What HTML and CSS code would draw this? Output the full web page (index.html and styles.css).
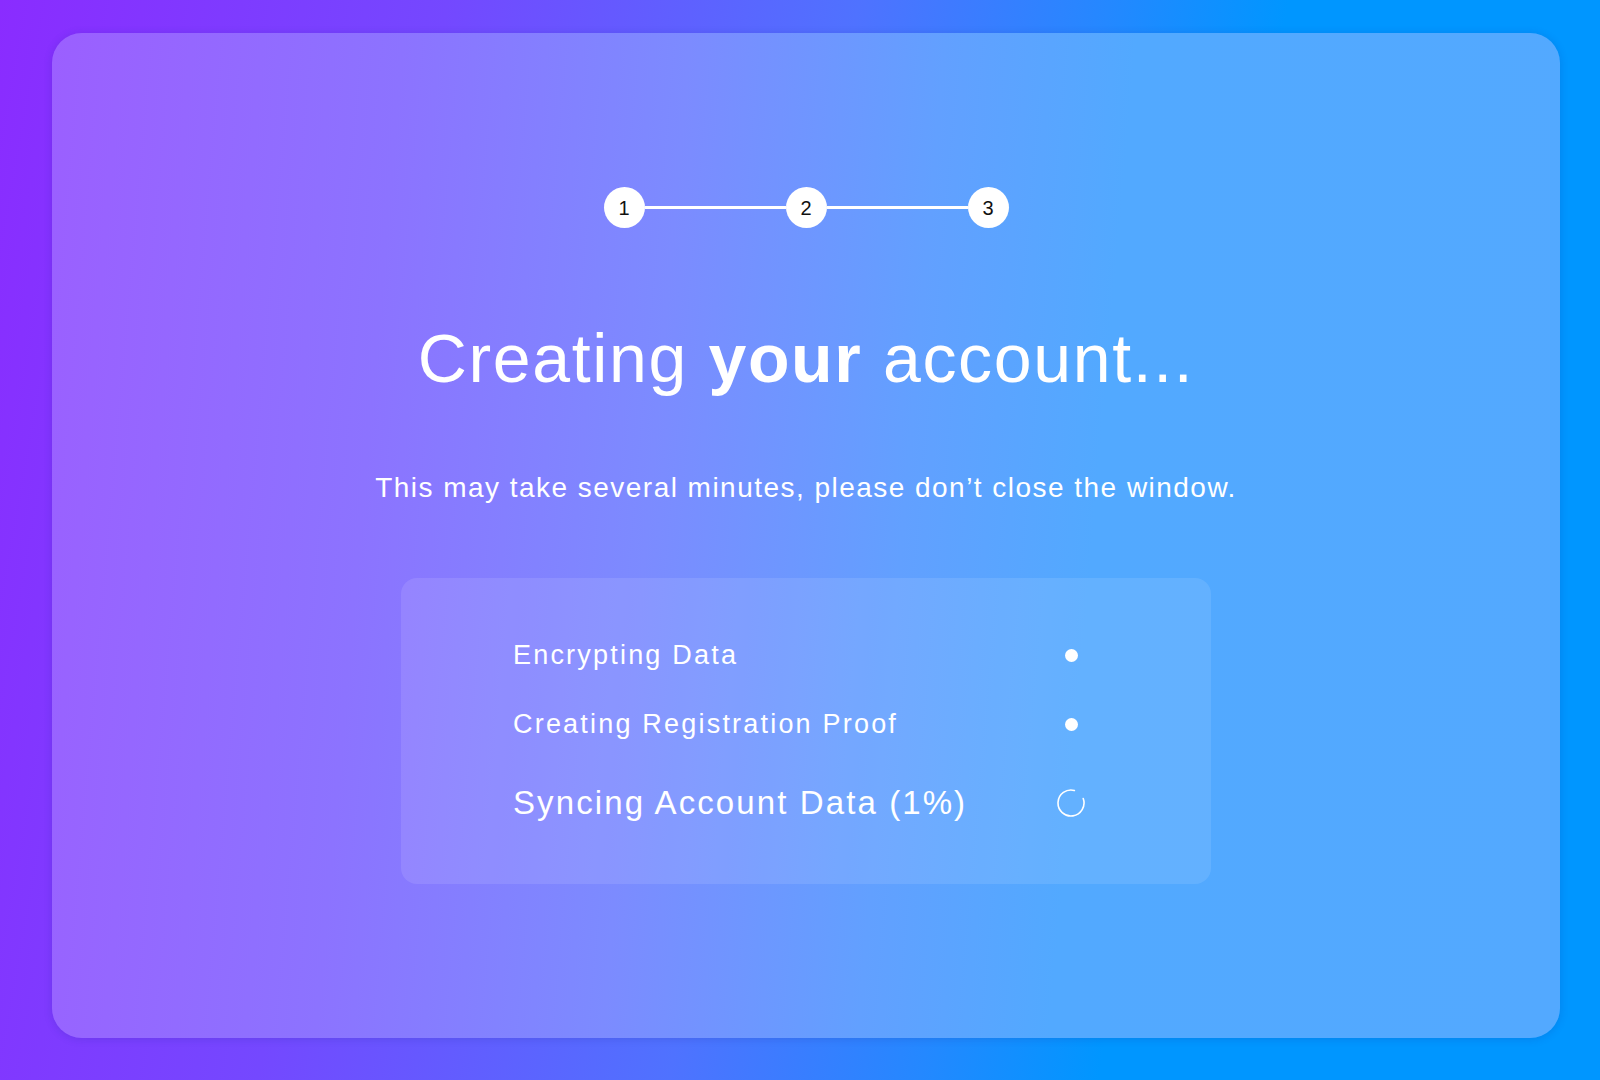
FILE: index.html
```html
<!DOCTYPE html>
<html lang="en">
<head>
<meta charset="utf-8">
<title>Creating your account</title>
<link rel="stylesheet" href="styles.css">
</head>
<body>
<div class="screen">
  <main class="card">
    <div class="steps">
      <span class="step">1</span>
      <span class="step-line"></span>
      <span class="step">2</span>
      <span class="step-line"></span>
      <span class="step">3</span>
    </div>
    <h1 class="title">Creating <b>your</b> account...</h1>
    <p class="subtitle">This may take several minutes, please don’t close the window.</p>
    <section class="tasks">
      <div class="task">
        <span class="task-label">Encrypting Data</span>
        <span class="task-state"><span class="dot"></span></span>
      </div>
      <div class="task">
        <span class="task-label">Creating Registration Proof</span>
        <span class="task-state"><span class="dot"></span></span>
      </div>
      <div class="task task-active">
        <span class="task-label">Syncing Account Data (1%)</span>
        <span class="task-state">
          <svg class="spinner" width="28" height="28" viewBox="0 0 28 28"><path d="M26.22 9.55 A13 13 0 1 1 17.37 1.44" fill="none" stroke="#fff" stroke-width="1.6" stroke-linecap="round"/></svg>
        </span>
      </div>
    </section>
  </main>
</div>
</body>
</html>
```

FILE: styles.css
```css
html, body {
  margin: 0;
  padding: 0;
}
body {
  width: 1600px;
  height: 1080px;
  overflow: hidden;
  font-family: "Liberation Sans", Arial, sans-serif;
  color: #fff;
}
.screen {
  box-sizing: border-box;
  width: 1600px;
  height: 1080px;
  padding: 33px 40px 42px 52px;
  background: linear-gradient(100deg, #8a2cff 0%, #7448ff 25%, #4f72ff 48%, #2488ff 62%, #0096ff 72%, #0096ff 100%);
}
.card {
  box-sizing: border-box;
  height: 100%;
  border-radius: 30px;
  background: linear-gradient(95deg, #9b5fff 0%, #8c73ff 22%, #7c8bff 40%, #62a0ff 56%, #52a9ff 68%, #53a9ff 100%);
  box-shadow: 0 1px 8px rgba(20, 40, 140, 0.18);
  display: flex;
  flex-direction: column;
  align-items: center;
  padding-top: 154px;
}
.steps {
  display: flex;
  align-items: center;
}
.step {
  width: 41px;
  height: 41px;
  border-radius: 50%;
  background: #fff;
  color: #111;
  font-size: 20px;
  display: flex;
  align-items: center;
  justify-content: center;
  line-height: 1;
}
.step-line {
  width: 141px;
  height: 3px;
  background: #fff;
}
.title {
  margin: 90px 0 0;
  font-size: 68px;
  line-height: 80px;
  font-weight: 400;
  letter-spacing: 1.65px;
}
.title b {
  font-weight: 700;
}
.subtitle {
  margin: 72px 0 0;
  font-size: 28px;
  line-height: 36px;
  letter-spacing: 1.47px;
}
.tasks {
  box-sizing: border-box;
  width: 810px;
  margin-top: 72px;
  padding: 57px 126px 61px 112px;
  border-radius: 16px;
  background: rgba(255, 255, 255, 0.1);
  display: flex;
  flex-direction: column;
}
.task {
  display: flex;
  align-items: center;
  justify-content: space-between;
  height: 40px;
  font-size: 27px;
  letter-spacing: 2.2px;
}
.task + .task {
  margin-top: 29px;
}
.task.task-active {
  margin-top: 39px;
  font-size: 33px;
  letter-spacing: 2.1px;
}
.task-state {
  width: 28px;
  height: 28px;
  display: flex;
  align-items: center;
  justify-content: center;
}
.dot {
  width: 13px;
  height: 13px;
  border-radius: 50%;
  background: #fff;
}
.spinner {
  display: block;
}
```
